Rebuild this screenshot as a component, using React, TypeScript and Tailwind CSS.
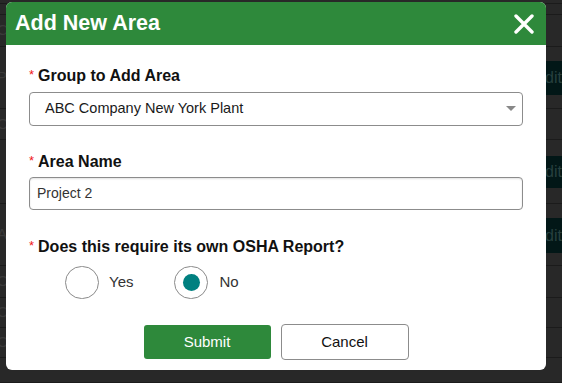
import React from "react";

const rows: { h: number; t?: string; edit?: [number, number] }[] = [
  { h: 4 },
  { h: 11 },
  { h: 32, t: "C" },
  { h: 62, t: "P", edit: [14, 34] },
  { h: 31, t: "O" },
  { h: 64, edit: [16, 32] },
  { h: 62, t: "A", edit: [14, 35] },
  { h: 32, t: "O" },
  { h: 30, t: "O" },
  { h: 30, t: "O" },
  { h: 25 },
];

export default function App() {
  return (
    <div
      className="relative w-[562px] h-[383px] overflow-hidden bg-[#282828]"
      style={{ fontFamily: '"Liberation Sans", Arial, sans-serif' }}
    >
      {/* dimmed background table */}
      <div className="flex flex-col">
        {rows.map((r, i) => (
          <div
            key={i}
            className="relative flex items-center border-b border-[#1b1b1b] text-[15px] text-[#3a3a3a]"
            style={{ height: r.h }}
          >
            <span className="ml-[-3px]">{r.t}</span>
            {r.edit && (
              <div
                className="absolute right-0 w-[40px] bg-[#021717] flex items-center justify-end text-[#27403f] text-[16px]"
                style={{ top: r.edit[0], height: r.edit[1] }}
              >
                dit
              </div>
            )}
          </div>
        ))}
      </div>

      {/* modal */}
      <div className="absolute left-[6px] top-[2px] w-[540px] h-[368px] rounded-[6px] bg-white overflow-hidden flex flex-col">
        <div className="h-[43px] bg-[#2e893b] flex items-center justify-between pl-[9px] pr-[12px] shrink-0">
          <span className="text-white font-bold text-[21.5px] leading-none">Add New Area</span>
          <svg width="20" height="20" viewBox="0 0 20 20">
            <path d="M2 2 L18 18 M18 2 L2 18" stroke="white" strokeWidth="3.4" strokeLinecap="round" />
          </svg>
        </div>

        <div className="flex flex-col px-[23px] pt-[22px]">
          <div className="flex items-center h-[18px] text-[16px] font-bold text-[#111] leading-[18px]">
            <span className="text-[#f01818] text-[13px] font-normal mr-[4px] mt-[-3px]">*</span>
            Group to Add Area
          </div>
          <div className="mt-[7px] h-[34px] rounded-[4px] border border-[#8c8c8c] flex items-center justify-between pl-[15px] pr-[6px] text-[14.5px] text-[#1a1a1a]">
            <span>ABC Company New York Plant</span>
            <svg width="10" height="6" viewBox="0 0 10 6">
              <path d="M0 0 L10 0 L5 5 Z" fill="#888" />
            </svg>
          </div>

          <div className="mt-[27px] flex items-center h-[18px] text-[16px] font-bold text-[#111] leading-[18px]">
            <span className="text-[#f01818] text-[13px] font-normal mr-[4px] mt-[-3px]">*</span>
            Area Name
          </div>
          <div className="mt-[6px] h-[33px] rounded-[4px] border border-[#8c8c8c] shadow-[inset_0_1px_2px_rgba(0,0,0,0.12)] flex items-center pl-[7px] text-[14px] text-[#333]">
            Project 2
          </div>

          <div className="mt-[28px] flex items-center h-[18px] text-[16px] font-bold text-[#111] leading-[18px]">
            <span className="text-[#f01818] text-[13px] font-normal mr-[4px] mt-[-3px]">*</span>
            Does this require its own OSHA Report?
          </div>
          <div className="mt-[10px] ml-[36px] flex items-center h-[33px] text-[15px] text-[#333]">
            <div className="w-[34px] h-[33px] rounded-full border border-[#8a8a8a] bg-white" />
            <span className="ml-[10px]">Yes</span>
            <div className="ml-[41px] w-[34px] h-[33px] rounded-full border border-[#8a8a8a] bg-white flex items-center justify-center">
              <div className="w-[17px] h-[17px] rounded-full bg-[#008080]" />
            </div>
            <span className="ml-[11px]">No</span>
          </div>

          <div className="mt-[26px] flex justify-center gap-[10px]">
            <div className="w-[127px] h-[34px] rounded-[3px] bg-[#2e893b] text-white text-[15px] flex items-center justify-center">
              Submit
            </div>
            <div className="w-[128px] h-[36px] mt-[-1px] rounded-[4px] border border-[#8c8c8c] bg-white text-[#111] text-[15px] flex items-center justify-center">
              Cancel
            </div>
          </div>
        </div>
      </div>
    </div>
  );
}
